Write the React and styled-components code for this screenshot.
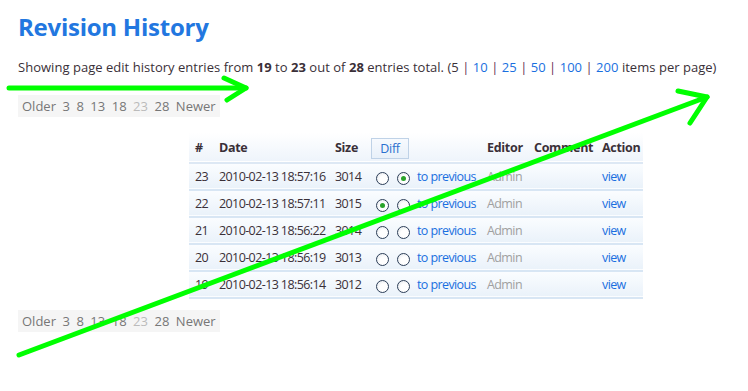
import React from "react";
import styled, { createGlobalStyle } from "styled-components";

const GlobalStyle = createGlobalStyle`
  html, body {
    margin: 0;
    padding: 0;
    background: #fff;
  }
  body {
    font-family: "Open Sans", "Noto Sans", sans-serif;
    color: #333;
  }
`;

const Page = styled.div`
  position: relative;
  width: 748px;
  height: 391px;
  padding: 12px 0 0 18px;
  box-sizing: border-box;
  overflow: hidden;
`;

const Title = styled.h1`
  margin: 0;
  font-size: 24px;
  line-height: 30px;
  font-weight: 700;
  color: #2277e0;
  letter-spacing: -0.25px;
`;

const Summary = styled.p`
  margin: 16px 0 0;
  font-size: 13px;
  line-height: 18px;
  color: #3a3038;
  letter-spacing: 0.03px;

  b {
    font-weight: 700;
  }
`;

const Link = styled.a`
  color: #1a6fe0;
  text-decoration: none;
`;

const Sep = styled.span`
  color: #6a3050;
`;

const Pager = styled.div`
  display: inline-flex;
  gap: 6.5px;
  background: #f5f5f5;
  padding: 0 4px;
  font-size: 13px;
  line-height: 22px;
  color: #777;
`;

const PagerItem = styled.span`
  color: ${(p) => (p.$current ? "#bbb" : "#777")};
`;

const PagerRow = styled.div`
  margin-top: ${(p) => p.$top}px;
`;

const Table = styled.table`
  margin: 16px 0 0 171px;
  border-collapse: collapse;
  table-layout: fixed;
  font-size: 12.5px;
  letter-spacing: -0.6px;
  width: 454px;
`;

const HeadRow = styled.tr`
  background: linear-gradient(#fff, #eef4fb);
  border-bottom: 2px solid #dde8f4;
  height: 30px;
`;

const Th = styled.th`
  text-align: left;
  font-weight: 700;
  color: #3a3038;
  letter-spacing: -0.3px;
  padding: 0 0 0 ${(p) => p.$pl || 0}px;
  width: ${(p) => p.$w}px;
`;

const Row = styled.tr`
  background: linear-gradient(#fbfdff, #eaf2fa);
  border-bottom: 2px solid #d8e6f4;
  height: 27px;
`;

const Td = styled.td`
  color: ${(p) => p.$color || "#3a3038"};
  padding: 0 0 0 ${(p) => p.$pl || 0}px;
  white-space: nowrap;
  overflow: visible;
`;

const DiffButton = styled.button`
  font: inherit;
  font-weight: 400;
  font-size: 12.5px;
  letter-spacing: -0.3px;
  color: #2a6fcf;
  background: linear-gradient(#f7fafe, #e8f0f9);
  border: 1px solid #bfd2e7;
  padding: 0;
  width: 38px;
  height: 21px;
  margin-top: 1px;
`;

const Radios = styled.span`
  display: inline-flex;
  gap: 8px;
  vertical-align: middle;
  margin: 0 7px 0 5px;
`;

const Radio = styled.span`
  width: 11px;
  height: 11px;
  border-radius: 50%;
  border: 1px solid #2c3e58;
  background: radial-gradient(circle at 60% 60%, #fff 40%, #dfe3e8 100%);
  display: inline-flex;
  align-items: center;
  justify-content: center;
  margin-top: 3px;

  &::after {
    content: "";
    width: 5px;
    height: 5px;
    border-radius: 50%;
    background: ${(p) => (p.$checked ? "#2aa32a" : "transparent")};
  }
`;

const Overlay = styled.svg`
  position: absolute;
  left: 0;
  top: 0;
  pointer-events: none;
`;

const rows = [
  { n: 23, date: "2010-02-13 18:57:16", size: 3014, a: false, b: true },
  { n: 22, date: "2010-02-13 18:57:11", size: 3015, a: true, b: false },
  { n: 21, date: "2010-02-13 18:56:22", size: 3014, a: false, b: false },
  { n: 20, date: "2010-02-13 18:56:19", size: 3013, a: false, b: false },
  { n: 19, date: "2010-02-13 18:56:14", size: 3012, a: false, b: false },
];

const PagerBar = () => (
  <Pager>
    <PagerItem>Older</PagerItem>
    <PagerItem>3</PagerItem>
    <PagerItem>8</PagerItem>
    <PagerItem>13</PagerItem>
    <PagerItem>18</PagerItem>
    <PagerItem $current>23</PagerItem>
    <PagerItem>28</PagerItem>
    <PagerItem>Newer</PagerItem>
  </Pager>
);

const App = () => {
  return (
    <Page>
      <GlobalStyle />
      <Title>Revision History</Title>
      <Summary>
        Showing page edit history entries from <b>19</b> to <b>23</b> out of <b>28</b> entries total. (5{" "}
        <Sep>|</Sep> <Link>10</Link> <Sep>|</Sep> <Link>25</Link> <Sep>|</Sep> <Link>50</Link> <Sep>|</Sep>{" "}
        <Link>100</Link> <Sep>|</Sep> <Link>200</Link> items per page)
      </Summary>
      <PagerRow $top={18}>
        <PagerBar />
      </PagerRow>
      <Table>
        <thead>
          <HeadRow>
            <Th $pl={6} $w={24}>#</Th>
            <Th $w={116}>Date</Th>
            <Th $w={36}>Size</Th>
            <Th $w={116}>
              <DiffButton>Diff</DiffButton>
            </Th>
            <Th $w={47}>Editor</Th>
            <Th $w={68}>Comment</Th>
            <Th $w={41}>Action</Th>
          </HeadRow>
        </thead>
        <tbody>
          {rows.map((r) => (
            <Row key={r.n}>
              <Td $pl={6}>{r.n}</Td>
              <Td>{r.date}</Td>
              <Td>{r.size}</Td>
              <Td>
                <Radios>
                  <Radio $checked={r.a} />
                  <Radio $checked={r.b} />
                </Radios>
                <Link>to previous</Link>
              </Td>
              <Td $color="#a0a0a0">Admin</Td>
              <Td />
              <Td>
                <Link>view</Link>
              </Td>
            </Row>
          ))}
        </tbody>
      </Table>
      <PagerRow $top={10}>
        <PagerBar />
      </PagerRow>

      <Overlay width="748" height="391" viewBox="0 0 748 391">
        <g stroke="#00ff00" strokeWidth="5" strokeLinecap="round" strokeLinejoin="round" fill="none">
          <line x1="9" y1="88" x2="246" y2="88" />
          <polyline points="224,78 246,88 227,100" />
          <line x1="19" y1="355" x2="707" y2="97" />
          <polyline points="678,91 707,97 690,123" />
        </g>
      </Overlay>
    </Page>
  );
};

export default App;
